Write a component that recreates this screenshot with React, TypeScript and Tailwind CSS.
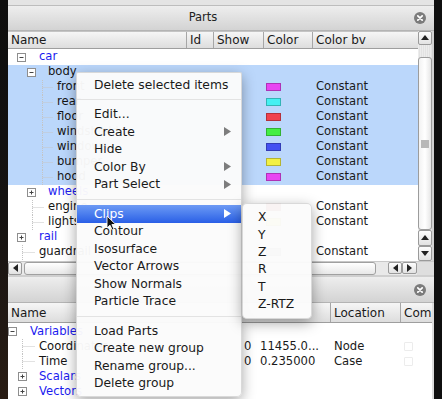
import React from "react";

const FONT = "font-['DejaVu_Sans','Liberation_Sans',sans-serif]";

type TreeNode = {
  name: string;
  x: number; // page x of the label
  blue?: boolean;
  box?: "minus" | "plus";
  boxX?: number;
  guide?: number;
  sel?: boolean;
  swatch?: string;
  bv?: string;
};

const parts: TreeNode[] = [
  { name: "car", x: 39, blue: true, box: "minus", boxX: 17 },
  { name: "body", x: 48, box: "minus", boxX: 27, sel: true },
  { name: "front", x: 57, guide: 42, sel: true, swatch: "#e844f2", bv: "Constant" },
  { name: "rear", x: 57, guide: 42, sel: true, swatch: "#44f0f2", bv: "Constant" },
  { name: "floor", x: 57, guide: 42, sel: true, swatch: "#f0424e", bv: "Constant" },
  { name: "windshield", x: 57, guide: 42, sel: true, swatch: "#44ee44", bv: "Constant" },
  { name: "windows", x: 57, guide: 42, sel: true, swatch: "#4450f2", bv: "Constant" },
  { name: "bumper", x: 57, guide: 42, sel: true, swatch: "#f2f044", bv: "Constant" },
  { name: "hood", x: 57, guide: 42, sel: true, swatch: "#e844f2", bv: "Constant" },
  { name: "wheels", x: 48, blue: true, box: "plus", boxX: 27 },
  { name: "engine", x: 48, guide: 32, swatch: "#b01a1a", bv: "Constant" },
  { name: "lights", x: 48, guide: 32, swatch: "#f2f044", bv: "Constant" },
  { name: "rail", x: 39, blue: true, box: "plus", boxX: 17 },
  { name: "guardrail", x: 39, guide: 22, swatch: "#999999", bv: "Constant" },
];

type VarRow = TreeNode & { a?: string; value?: string; loc?: string; check?: boolean };

const variables: VarRow[] = [
  { name: "Variables", x: 30, blue: true, box: "minus", boxX: 8 },
  { name: "Coordinates", x: 39, guide: 22, a: "0", value: "11455.0...", loc: "Node", check: true },
  { name: "Time", x: 39, guide: 22, a: "0", value: "0.235000", loc: "Case", check: true },
  { name: "Scalars", x: 39, blue: true, box: "plus", boxX: 18 },
  { name: "Vectors", x: 39, blue: true, box: "plus", boxX: 18 },
];

function Gutter({ node }: { node: TreeNode }) {
  const w = node.x - 10;
  const bx = node.boxX !== undefined ? node.boxX - 8 : 0;
  const gx = node.guide !== undefined ? node.guide - 8 + 0.5 : 0;
  return (
    <svg width={w} height={15} className="shrink-0 mr-[2px]">
      {node.guide !== undefined && (
        <g stroke="#c4c4c4" strokeWidth={1} strokeDasharray="1 1">
          <line x1={gx} y1={0} x2={gx} y2={15} />
          <line x1={gx} y1={7.5} x2={w - 2} y2={7.5} />
        </g>
      )}
      {node.box && (
        <g>
          <rect x={bx + 0.5} y={3.5} width={8} height={8} fill="#fff" stroke="#8e8e8e" />
          <line x1={bx + 2.5} y1={7.5} x2={bx + 6.5} y2={7.5} stroke="#444" />
          {node.box === "plus" && <line x1={bx + 4.5} y1={5.5} x2={bx + 4.5} y2={9.5} stroke="#444" />}
        </g>
      )}
    </svg>
  );
}

function CloseDot() {
  return (
    <svg width={12} height={12} viewBox="0 0 12 12">
      <circle cx={6} cy={6} r={6} fill="#7b7b7b" />
      <path d="M3.8 3.8 L8.2 8.2 M8.2 3.8 L3.8 8.2" stroke="#fff" strokeWidth={1.7} strokeLinecap="round" />
    </svg>
  );
}

function Tri({ dir, color = "#222" }: { dir: "up" | "down" | "left" | "right"; color?: string }) {
  const pts = {
    up: "0,5 4,0 8,5",
    down: "0,0 8,0 4,5",
    left: "5,0 5,8 0,4",
    right: "0,0 5,4 0,8",
  }[dir];
  const vert = dir === "up" || dir === "down";
  return (
    <svg width={vert ? 8 : 5} height={vert ? 5 : 8}>
      <polygon points={pts} fill={color} />
    </svg>
  );
}

function ArrowBtn({ dir, className = "" }: { dir: "up" | "down" | "left" | "right"; className?: string }) {
  return (
    <div
      className={
        "flex items-center justify-center border border-[#9a9a9a] bg-gradient-to-b from-[#fdfdfd] to-[#e2e2e2] rounded-[2px] " +
        className
      }
    >
      <Tri dir={dir} />
    </div>
  );
}

function HeaderCell({ label, w, last }: { label: string; w: string; last?: boolean }) {
  return (
    <div
      className={
        "h-full flex items-center pl-[3px] overflow-hidden whitespace-nowrap " +
        w +
        (last ? "" : " border-r border-[#a6a6a6]")
      }
    >
      {label}
    </div>
  );
}

function MenuItem({ label, sub, active }: { label: string; sub?: boolean; active?: boolean }) {
  return (
    <div
      className={
        "h-[17.5px] pl-[17px] pr-[10px] flex items-center justify-between " +
        (active ? "bg-gradient-to-b from-[#6d9af4] to-[#2a5ee6] text-white" : "text-[#1a1a1a]")
      }
    >
      <span>{label}</span>
      {sub && (
        <svg width={7} height={9}>
          <polygon points="0,0 7,4.5 0,9" fill={active ? "#ffffff" : "#7d7d7d"} />
        </svg>
      )}
    </div>
  );
}

function MenuSep() {
  return (
    <div className="h-[12px] flex items-center">
      <div className="h-px w-full bg-[#e3e3e3]" />
    </div>
  );
}

function TitleBar({ title, h }: { title?: string; h: string }) {
  return (
    <div
      className={
        "flex items-center bg-gradient-to-b from-[#eeeeee] to-[#d3d3d3] border-b border-[#b4b4b4] " + h
      }
    >
      <div className="flex-1 flex justify-center pl-[2px] pr-[18px] text-[11.5px] text-[#222]">{title}</div>
      <div className="w-[20px] flex items-center justify-start">
        <CloseDot />
      </div>
    </div>
  );
}

export default function App() {
  return (
    <div className={"relative w-[442px] h-[399px] overflow-hidden flex bg-[#151210] " + FONT}>
      <div className="w-[8px] bg-gradient-to-b from-[#0e0e0e] via-[#141211] to-[#2a1d14]" />

      <div className="w-[426px] flex flex-col bg-[#dcdcdc]">
        <div className="h-[6px] bg-[#e4e4e4] border-b border-[#bdbdbd]" />
        <TitleBar title="Parts" h="h-[25px]" />

        {/* parts table */}
        <div className="flex h-[233px]">
          <div className="w-[410px] flex flex-col bg-white text-[11.6px]">
            <div className="h-[18px] flex bg-gradient-to-b from-[#f6f6f6] to-[#dddddd] border-b border-[#9e9e9e] border-t border-t-[#c4c4c4] text-[#1a1a1a] text-[12px]">
              <HeaderCell label="Name" w="w-[179px]" />
              <HeaderCell label="Id" w="w-[27px]" />
              <HeaderCell label="Show" w="w-[50px]" />
              <HeaderCell label="Color" w="w-[49px]" />
              <HeaderCell label="Color bv" w="flex-1" last />
            </div>
            <div className="flex-1 flex flex-col overflow-hidden pt-px">
              {parts.map((n) => (
                <div key={n.name} className={"h-[15px] flex items-center shrink-0 " + (n.sel ? "bg-[#bbd7fb]" : "")}>
                  <div className="w-[179px] flex items-center overflow-hidden whitespace-nowrap">
                    <Gutter node={n} />
                    <span className={n.blue ? "text-[#1b1bf0]" : "text-[#141414]"}>{n.name}</span>
                  </div>
                  <div className="w-[27px]" />
                  <div className="w-[50px]" />
                  <div className="w-[49px] pl-[2px] flex items-center">
                    {n.swatch && (
                      <span
                        className="block w-[15px] h-[8px] border border-[#00000040]"
                        style={{ background: n.swatch }}
                      />
                    )}
                  </div>
                  <div className="flex-1 pl-[3px] text-[#1a1a1a]">{n.bv}</div>
                </div>
              ))}
            </div>
          </div>

          {/* vertical scrollbar */}
          <div className="w-[14px] flex flex-col bg-[repeating-linear-gradient(90deg,#ececec_0px,#ececec_1px,#e2e2e2_1px,#e2e2e2_2px)]">
            <ArrowBtn dir="up" className="h-[14px]" />
            <div className="flex-1 pt-[12px] flex flex-col">
              <div className="flex-1 border border-[#9c9c9c] rounded-[3px] bg-gradient-to-r from-[#f2f2f2] via-[#ffffff] to-[#e6e6e6] flex flex-col items-center pt-[82px]">
                <div className="w-[8px] h-[8px] bg-[radial-gradient(circle,#b8b8b8_0.8px,transparent_1px)] bg-[length:2px_2px]" />
              </div>
            </div>
            <ArrowBtn dir="up" className="h-[16px]" />
            <ArrowBtn dir="down" className="h-[15px]" />
          </div>
          <div className="w-[2px] bg-[#d2d2d2]" />
        </div>

        {/* horizontal scrollbar */}
        <div className="h-[15px] flex items-center bg-[#e9e9e9] border-t border-[#c8c8c8]">
          <ArrowBtn dir="left" className="w-[14px] h-[13px]" />
          <div className="w-[352px] h-[13px] ml-[2px] border border-[#a0a0a0] rounded-[3px] bg-gradient-to-b from-[#ffffff] to-[#e8e8e8]" />
          <div className="w-[12px]" />
          <ArrowBtn dir="left" className="w-[14px] h-[12px]" />
          <ArrowBtn dir="right" className="w-[15px] h-[12px]" />
          <div className="flex-1 self-stretch bg-[#dedede]" />
        </div>
        <div className="h-[2px] bg-[#cfcfcf]" />

        <TitleBar h="h-[26px]" />

        {/* variables table */}
        <div className="flex-1 flex flex-col bg-white mr-[2px] text-[11.6px]">
          <div className="h-[20px] flex bg-gradient-to-b from-[#f6f6f6] to-[#dddddd] border-b border-[#9e9e9e] text-[#1a1a1a] text-[12px]">
            <HeaderCell label="Name" w="w-[323px]" />
            <HeaderCell label="Location" w="w-[70px]" />
            <HeaderCell label="Comments" w="flex-1" last />
          </div>
          <div className="flex flex-col pt-px">
            {variables.map((n) => (
              <div key={n.name} className="h-[15px] flex items-center shrink-0">
                <div className="w-[236px] flex items-center overflow-hidden whitespace-nowrap">
                  <Gutter node={n} />
                  <span className={n.blue ? "text-[#1b1bf0]" : "text-[#141414]"}>{n.name}</span>
                </div>
                <div className="w-[16px] text-[#1a1a1a]">{n.a}</div>
                <div className="w-[74px] text-[#1a1a1a] whitespace-nowrap">{n.value}</div>
                <div className="w-[67px] text-[#1a1a1a]">{n.loc}</div>
                <div className="flex-1 pl-[3px]">
                  {n.check && <div className="w-[9px] h-[9px] border border-[#ececec] rounded-[1px]" />}
                </div>
              </div>
            ))}
          </div>
        </div>
      </div>

      <div className="w-[8px] bg-[#0f0f0f]" />

      {/* context menu */}
      <div className="absolute left-[76px] top-[72px] w-[166px] pt-[3px] pb-[4px] bg-[#fbfbfb]/[0.97] rounded-b-[5px] rounded-t-[2px] border border-[#00000022] shadow-[0_4px_14px_rgba(0,0,0,0.35)] text-[12.3px]">
        <MenuItem label="Delete selected items" />
        <MenuSep />
        <MenuItem label="Edit..." />
        <MenuItem label="Create" sub />
        <MenuItem label="Hide" />
        <MenuItem label="Color By" sub />
        <MenuItem label="Part Select" sub />
        <MenuSep />
        <MenuItem label="Clips" sub active />
        <MenuItem label="Contour" />
        <MenuItem label="Isosurface" />
        <MenuItem label="Vector Arrows" />
        <MenuItem label="Show Normals" />
        <MenuItem label="Particle Trace" />
        <MenuSep />
        <MenuItem label="Load Parts" />
        <MenuItem label="Create new group" />
        <MenuItem label="Rename group..." />
        <MenuItem label="Delete group" />
      </div>

      {/* clips submenu */}
      <div className="absolute left-[242px] top-[203px] w-[70px] py-[5px] bg-[#fbfbfb]/[0.97] rounded-[5px] border border-[#00000022] shadow-[0_4px_14px_rgba(0,0,0,0.35)] text-[12.3px] text-[#1a1a1a]">
        {["X", "Y", "Z", "R", "T", "Z-RTZ"].map((s) => (
          <div key={s} className="h-[17.3px] pl-[15px] flex items-center">
            {s}
          </div>
        ))}
      </div>

      {/* mouse pointer */}
      <svg className="absolute left-[106px] top-[215px]" width={11} height={17} viewBox="0 0 11 17">
        <path d="M1 1 L1 13 L4 10.2 L6.2 15 L8 14.2 L5.9 9.5 L9.8 9.5 Z" fill="#111" stroke="#fff" strokeWidth={0.9} strokeLinejoin="round" />
      </svg>
    </div>
  );
}
